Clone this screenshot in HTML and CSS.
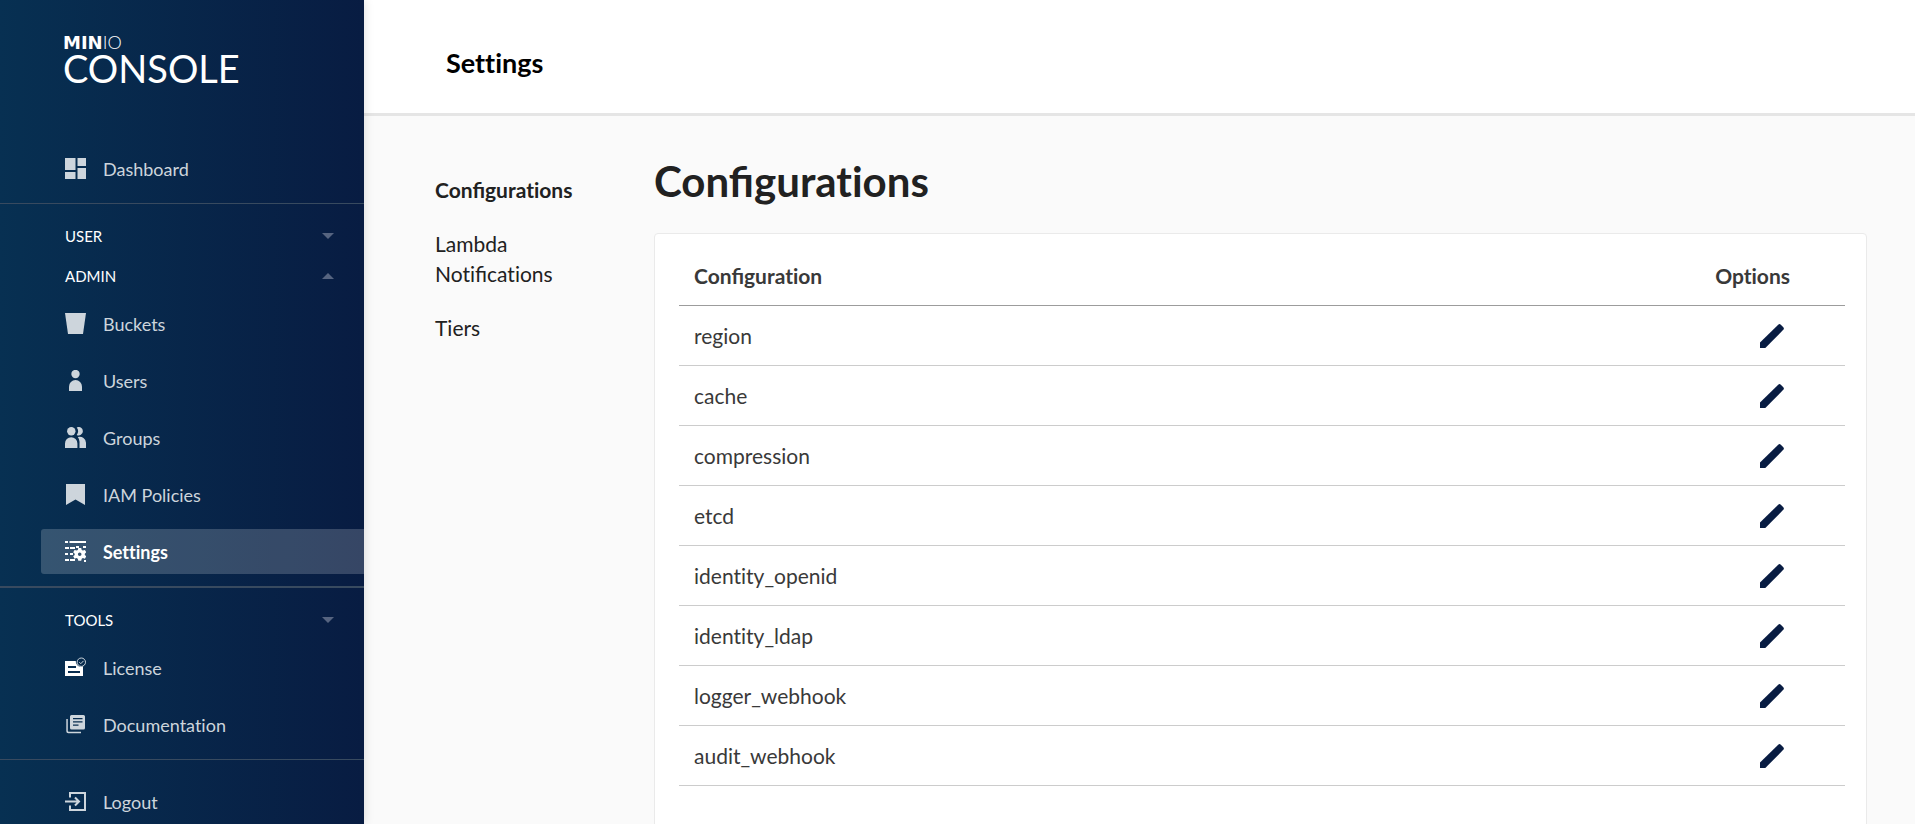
FILE: index.html
```html
<!DOCTYPE html>
<html lang="en">
<head>
<meta charset="utf-8">
<title>MinIO Console</title>
<meta name="viewport" content="width=device-width, initial-scale=1">
<link rel="stylesheet" href="styles.css">
</head>
<body>
<svg class="sprite" aria-hidden="true">
  <symbol id="pencil" viewBox="0 0 24 24"><path d="M0 24v-5.400L18.200.700q1.300-1.200 2.600 0L23.300 3.200q1.200 1.300 0 2.600L5.300 24z"/></symbol>
</svg>
<div class="app">
  <aside class="sidebar">
    <div class="logo">
      <span class="logo-brand"><b>MIN</b>IO</span>
      <span class="logo-product">CONSOLE</span>
    </div>
    <nav class="menu" aria-label="Main">
      <a class="item" href="#dashboard">
        <svg class="icon" viewBox="0 0 21 21"><path d="M0 0h10.500v12H0zM12.500 0H21v8h-8.500zM0 14h10.500v7H0zM12.500 10H21v11h-8.500z"/></svg>
        Dashboard
      </a>
      <hr class="divider">
      <button class="group" type="button" aria-expanded="false">USER <span class="caret"></span></button>
      <button class="group" type="button" aria-expanded="true">ADMIN <span class="caret caret-up"></span></button>
      <div class="items">
        <a class="item" href="#buckets">
          <svg class="icon" viewBox="0 0 21 21"><path d="M0 0h21l-3 21H3z"/></svg>
          Buckets
        </a>
        <a class="item" href="#users">
          <svg class="icon" viewBox="0 0 21 21"><circle cx="10.500" cy="4" r="4.200"/><path d="M4 21v-4.500a6.500 6.500 0 0 1 13 0V21z"/></svg>
          Users
        </a>
        <a class="item" href="#groups">
          <svg class="icon" viewBox="0 0 21 21"><circle cx="6.300" cy="4.200" r="4.200"/><path d="M0 21v-4.500a6.200 6.200 0 0 1 12.400 0V21zM11.700.5a4.200 4.200 0 1 1 0 7.400 6 6 0 0 0 0-7.400zM12.800 10a6.300 6.300 0 0 1 8.200 6.200V21h-6.500v-5a8 8 0 0 0-1.700-6z"/></svg>
          Groups
        </a>
        <a class="item" href="#policies">
          <svg class="icon" viewBox="0 0 21 21"><path d="M1 0h19v21l-9.500-5.500L1 21z"/></svg>
          IAM Policies
        </a>
        <a class="item active" href="#settings" aria-current="page">
          <svg class="icon" viewBox="0 0 21 21"><path d="M0 0h3v2H0zM4.500 0H21v2H4.500zM0 6h4v2H0zM5 6h5v2H5zM0 12h3v2H0zM5 12h3v2H5zM0 18h4v2H0zM5 18h5v2H5zM11 5h3v2h-3zM18 5h3v2h-3zM19 19h2v2h-2z"/><path fill-rule="evenodd" d="M13.300 7h2.900l.5 2 1.200.6 2-.7 1.400 2.400-1.500 1.400v1.200l1.500 1.400-1.400 2.400-2-.7-1.200.7-.5 2h-2.900l-.5-2-1.200-.7-2 .7-1.400-2.400 1.500-1.400v-1.200l-1.500-1.400 1.400-2.400 2 .7 1.200-.6zM14.700 11.500a1.800 1.800 0 1 0 0 3.600 1.800 1.800 0 0 0 0-3.600z"/></svg>
          Settings
        </a>
      </div>
      <hr class="divider divider-thick">
      <button class="group" type="button" aria-expanded="true">TOOLS <span class="caret"></span></button>
      <div class="items">
        <a class="item" href="#license">
          <svg class="icon icon-bright" viewBox="0 0 21 21"><path fill-rule="evenodd" d="M0 4h10.800a5.300 5.300 0 0 0 7.200 5.300V19H0zM3 9v2h8V9zM3 14v2h12v-2z"/><circle class="line" cx="16.300" cy="5.200" r="4.200"/><path class="line" d="m14.300 5.200 1.500 1.500 2.700-2.800"/></svg>
          License
        </a>
        <a class="item" href="#documentation">
          <svg class="icon" viewBox="0 0 21 21"><path fill-rule="evenodd" d="M6.500 1h12Q20 1 20 2.500V14q0 1.500-1.500 1.500h-12Q5 15.500 5 14V2.500Q5 1 6.500 1zM8 4v1.300h9.500V4zM8 7.200v1.300h9.500V7.200zM8 10.500v1.300h5.500v-1.300z"/><path d="M1.300 5h1.500v11.700q0 1 1 1H16v1.500H3.300q-2 0-2-2z"/></svg>
          Documentation
        </a>
      </div>
      <hr class="divider">
      <a class="item item-last" href="#logout">
        <svg class="icon" viewBox="0 0 21 21"><path class="stroke" d="M5 6.500V2h15v17H5v-4.500M0 10.500h14M10 6.500l4 4-4 4"/></svg>
        Logout
      </a>
    </nav>
  </aside>
  <main class="main">
    <header class="topbar"><h1 class="page-title">Settings</h1></header>
    <div class="content">
      <nav class="tabs" aria-label="Settings sections">
        <a class="tab selected" href="#configurations"><span class="liga">Confi</span>gurations</a>
        <a class="tab" href="#lambda">Lambda Not<span class="liga">ifi</span>cations</a>
        <a class="tab" href="#tiers">Tiers</a>
      </nav>
      <section class="panel">
        <h2 class="heading"><span class="liga">Confi</span>gurations</h2>
        <div class="card">
          <table class="table">
            <thead><tr><th><span class="liga">Confi</span>guration</th><th class="options">Options</th></tr></thead>
            <tbody>
              <tr><td>region</td><td class="options"><button class="edit" type="button" aria-label="Edit region"><svg><use href="#pencil"/></svg></button></td></tr>
              <tr><td>cache</td><td class="options"><button class="edit" type="button" aria-label="Edit cache"><svg><use href="#pencil"/></svg></button></td></tr>
              <tr><td>compression</td><td class="options"><button class="edit" type="button" aria-label="Edit compression"><svg><use href="#pencil"/></svg></button></td></tr>
              <tr><td>etcd</td><td class="options"><button class="edit" type="button" aria-label="Edit etcd"><svg><use href="#pencil"/></svg></button></td></tr>
              <tr><td>identity_openid</td><td class="options"><button class="edit" type="button" aria-label="Edit identity_openid"><svg><use href="#pencil"/></svg></button></td></tr>
              <tr><td>identity_ldap</td><td class="options"><button class="edit" type="button" aria-label="Edit identity_ldap"><svg><use href="#pencil"/></svg></button></td></tr>
              <tr><td>logger_webhook</td><td class="options"><button class="edit" type="button" aria-label="Edit logger_webhook"><svg><use href="#pencil"/></svg></button></td></tr>
              <tr><td>audit_webhook</td><td class="options"><button class="edit" type="button" aria-label="Edit audit_webhook"><svg><use href="#pencil"/></svg></button></td></tr>
            </tbody>
          </table>
        </div>
      </section>
    </div>
  </main>
</div>
</body>
</html>
```
FILE: styles.css
```css
* {
  box-sizing: border-box;
}

body {
  margin: 0;
  background: #fafafa;
  color: #212121;
  font-family: Lato, "Liberation Sans", sans-serif;
  font-size: 21px;
  font-variant-ligatures: none;
  line-height: 30px;
}

/* Only the "fi" pair is joined */
.liga {
  font-variant-ligatures: common-ligatures;
}

button {
  border: 0;
  background: none;
  font: inherit;
  cursor: pointer;
}

a {
  color: inherit;
  text-decoration: none;
}

.sprite {
  display: none;
}

.app {
  display: flex;
  height: 100vh;
  overflow: hidden;
}

/* Sidebar */
.sidebar {
  flex: 0 0 364px;
  overflow-y: auto;
  scrollbar-width: none;
  background: linear-gradient(90deg, #073052 0%, #081c42 100%);
  box-shadow: 0 0 10px rgba(0, 0, 0, 0.14);
  z-index: 1;
  color: #fff;
}

.logo {
  display: flex;
  flex-direction: column;
  padding: 32px 0 0 63px;
  height: 146px;
}

.logo-brand {
  font-size: 18px;
  line-height: 20px;
  font-weight: 300;
}

.logo-brand b {
  font-family: "DejaVu Sans", sans-serif;
  font-weight: 700;
}

.logo-product {
  font-size: 38px;
  line-height: 30px;
}

.menu {
  font-size: 18px;
}

.items {
  display: flex;
  flex-direction: column;
  gap: 12px;
  margin-top: 5px;
}

.item {
  display: flex;
  align-items: center;
  gap: 17px;
  height: 45px;
  margin-left: 41px;
  padding-left: 24px;
  border-radius: 3px 0 0 3px;
  color: #cdd5dc;
}

.item.active {
  background: rgba(255, 255, 255, 0.19);
  color: #fff;
  font-weight: 700;
}

.item-last {
  margin-top: 19px;
}

.icon {
  flex: none;
  width: 21px;
  height: 21px;
  fill: currentColor;
}

.icon-bright {
  color: #fff;
}

.line {
  fill: none;
  stroke: #cdd5dc;
  stroke-width: 1;
}

.stroke {
  fill: none;
  stroke: currentColor;
  stroke-width: 2;
}

.divider {
  height: 1px;
  margin: 12px 0;
  border: 0;
  background: #384a5f;
}

.divider-thick {
  height: 2px;
}

.group {
  display: flex;
  align-items: center;
  justify-content: space-between;
  width: 100%;
  height: 40px;
  padding: 0 30px 0 65px;
  color: #fff;
  font-size: 15px;
}

.caret {
  border: 6px solid transparent;
  border-bottom-width: 0;
  border-top-color: #566480;
}

.caret-up {
  border-width: 0 6px 6px;
  border-bottom-color: #566480;
}

/* Main */
.main {
  flex: 1;
  min-width: 0;
  overflow-y: auto;
  scrollbar-width: none;
}

.topbar {
  display: flex;
  align-items: center;
  height: 116px;
  padding: 12px 82px 0;
  border-bottom: 3px solid #e5e5e5;
  background: #fff;
}

.page-title {
  margin: 0;
  color: #000;
  font-size: 27px;
}

.content {
  display: flex;
  padding: 35px 48px 48px 71px;
}

.tabs {
  flex: 0 0 219px;
  padding: 12px 48px 0 0;
}

.tab {
  display: block;
  padding: 12px 0;
}

.tab.selected {
  font-weight: 700;
}

.panel {
  flex: 1;
  min-width: 0;
}

.heading {
  margin: 0 0 22px;
  font-size: 42px;
  line-height: 60px;
}

.card {
  min-height: 640px;
  padding: 12px 21px 24px 24px;
  border: 1px solid #eaeaea;
  border-radius: 4px;
  background: #fff;
}

.table {
  width: 100%;
  border-collapse: separate;
  border-spacing: 0;
  color: #393939;
}

.table th,
.table td {
  height: 60px;
  padding: 0 15px;
  border-bottom: 1px solid #ccc;
  text-align: left;
}

.table th {
  border-color: #9c9c9c;
}

.table .options {
  padding-right: 55px;
  text-align: right;
}

.edit {
  display: inline-flex;
  padding: 6px;
  vertical-align: middle;
}

.edit svg {
  width: 24px;
  height: 24px;
  fill: #081c42;
}
```
